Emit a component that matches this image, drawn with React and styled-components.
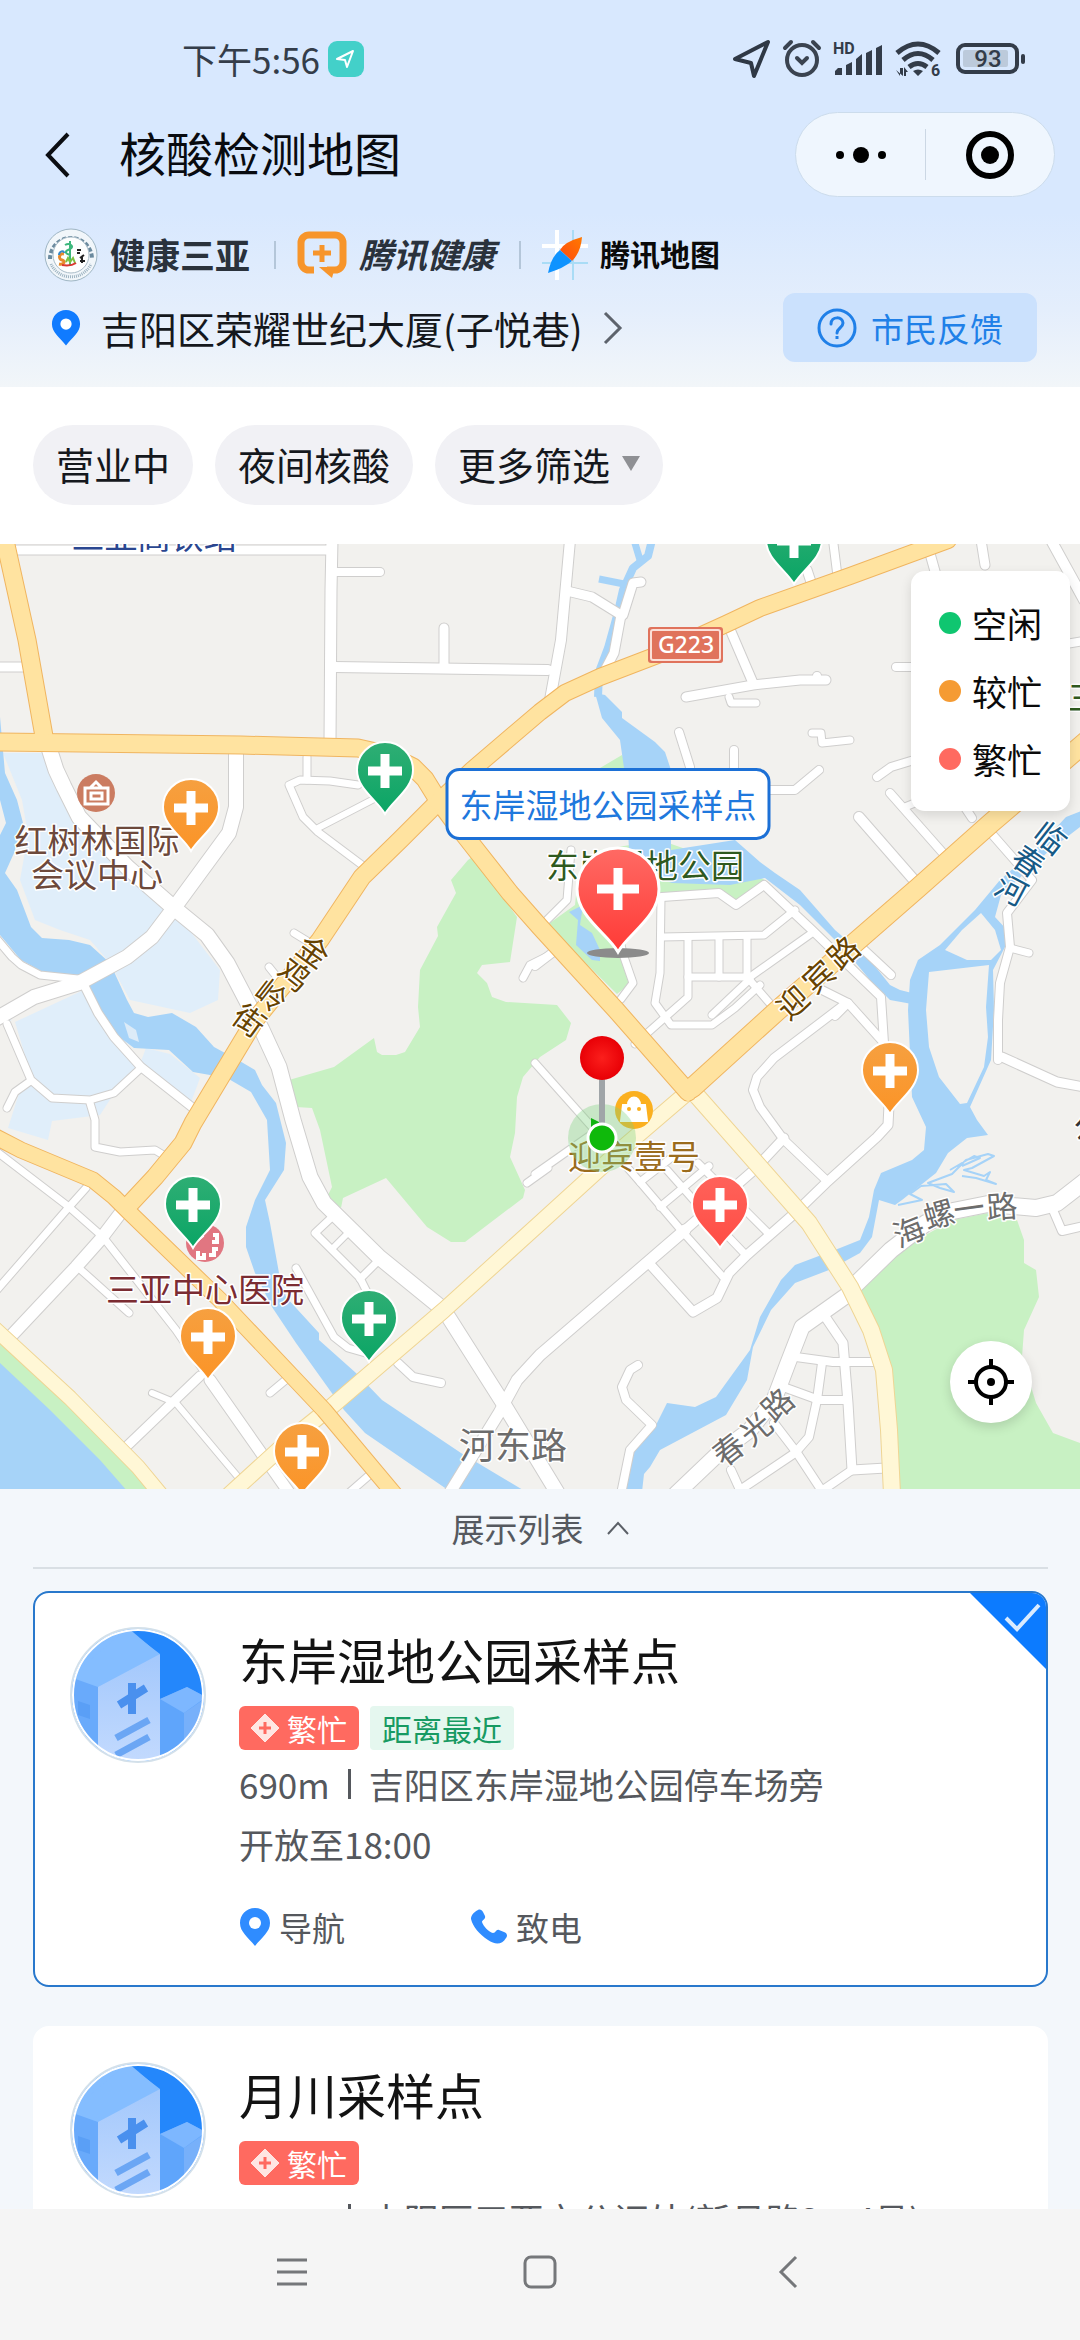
import React, { useState } from 'react';
import styled, { createGlobalStyle } from 'styled-components';

const PIN_COLORS = {
    free: ['#2fae74', '#0aa565'],
    medium: ['#f6a040', '#fb9427'],
    busy: ['#ff625a', '#ff4d45'],
};

const LEGEND = [
    { label: '空闲', color: '#0fc670' },
    { label: '较忙', color: '#f59b33' },
    { label: '繁忙', color: '#ff6a60' },
];

// tip of every pin, on the 1080 x 945 map
const PINS = [
    { id: 1, level: 'free', x: 794, y: 42 },
    { id: 2, level: 'free', x: 385, y: 272 },
    { id: 3, level: 'medium', x: 191, y: 309 },
    { id: 4, level: 'free', x: 193, y: 706 },
    { id: 5, level: 'medium', x: 208, y: 838 },
    { id: 6, level: 'free', x: 369, y: 820 },
    { id: 7, level: 'medium', x: 302, y: 953 },
    { id: 8, level: 'medium', x: 890, y: 572 },
    { id: 9, level: 'busy', x: 720, y: 706 },
];

const SITES = [
    {
        id: 1,
        name: '东岸湿地公园采样点',
        nearest: true,
        distance: '690m',
        address: '吉阳区东岸湿地公园停车场旁',
        open: '开放至18:00',
    },
    {
        id: 2,
        name: '月川采样点',
        nearest: false,
        distance: '730m',
        address: '吉阳区三亚市公证处(新月路2、4号)',
        open: '开放至18:00',
    },
];

// [width, points]
const WHITE_ROADS = [
    [9, '12,550 328,550'],
    [11, '332,540 331,590 330,742'],
    [8, '337,572 380,572'],
    [10, '334,667 548,670'],
    [9, '444,628 444,667'],
    [9, '-5,667 26,667'],
    [15, '48,745 56,770 64,787 79,817 127,867 174,908 207,935 227,963 250,1007 262,1030 279,1067 293,1120 310,1177 324,1203 379,1257 444,1310'],
    [14, '444,1310 503,1403 557,1492'],
    [14, '236,750 236,807 229,833 174,908 152,937 127,957 79,983 34,997 -6,1020'],
    [7, '-4,938 12,957 21,965 40,975 78,979'],
    [8, '84,985 98,1013 114,1037 141,1067 193,1108'],
    [7, '141,1068 114,1093 90,1100 52,1098 31,1080 7,1024'],
    [7, '29,1082 15,1092 7,1108'],
    [7, '90,1103 95,1120 95,1147 120,1152 155,1150 165,1156'],
    [7, '307,757 307,780'],
    [7, '358,785 330,781 300,780 289,785 303,817 318,832 366,868'],
    [6, '318,828 374,799'],
    [7, '294,933 312,944'],
    [7, '269,967 281,982'],
    [7, '523,978 530,965 548,956'],
    [7, '-4,1151 69,1207 103,1237 176,1330 210,1380'],
    [11, '210,1380 290,1494'],
    [7, '-4,1291 69,1207 86,1188'],
    [12, '122,1211 100,1240 76,1267 12,1335'],
    [7, '81,1270 129,1313'],
    [9, '200,1376 126,1447'],
    [6, '152,1393 176,1403 243,1483'],
    [7, '270,1393 288,1378'],
    [7, '350,1492 373,1472'],
    [7, '296,1268 334,1337 348,1348 369,1354'],
    [8, '398,1363 413,1377 441,1383'],
    [7, '331,1218 315,1233 360,1278 368,1294'],
    [7, '379,1260 360,1279'],
    [6, '346,1235 332,1249'],
    [11, '449,1494 499,1413 517,1380 540,1355 685,1230'],
    [9, '685,1230 754,1170 784,1138'],
    [7, '535,1063 592,1127 640,1182 681,1230 723,1277'],
    [7, '535,1174 592,1134'],
    [7, '527,1183 548,1168'],
    [9, '648,1262 693,1312 717,1298 729,1273 747,1255 795,1213 826,1183 877,1137 888,1125 889,1105'],
    [8, '826,1180 784,1140 760,1107 753,1090 757,1077 774,1058 845,1004'],
    [7, '640,1182 671,1158'],
    [7, '660,1207 709,1166'],
    [7, '667,1170 698,1205 743,1252'],
    [7, '698,1163 767,1232'],
    [15, '850,1293 802,1327 788,1363 774,1400 750,1430 719,1453 676,1494'],
    [16, '853,1287 891,1250 926,1223 953,1211 988,1204 1036,1208 1057,1203 1084,1182'],
    [8, '1053,1210 1062,1231 1084,1226'],
    [9, '824,1315 843,1343 848,1403 852,1470 886,1468'],
    [8, '852,1470 820,1492'],
    [8, '796,1357 833,1362 876,1362'],
    [8, '822,1363 817,1400 809,1437 795,1453 740,1490'],
    [8, '786,1388 819,1400 848,1400'],
    [8, '774,1423 797,1453 824,1494'],
    [8, '731,1470 741,1492'],
    [8, '638,1365 630,1370 622,1387 626,1400 652,1425 630,1450 621,1494'],
    [8, '991,833 1012,857 1032,880 1007,913 1010,947 1000,983 998,1020 998,1060'],
    [9, '1002,1057 1057,1082 1084,1087'],
    [7, '1010,948 1029,953'],
    [8, '662,897 719,893 736,905 764,885 812,930 881,997 884,1043'],
    [8, '848,1003 884,1043'],
    [7, '661,897 660,973 655,1003 671,1025 712,1025 735,1008 760,985'],
    [7, '688,937 688,997 635,1044'],
    [7, '662,937 764,935 795,910'],
    [7, '719,937 719,977'],
    [7, '747,937 747,977 773,1007'],
    [7, '688,977 750,977 812,933'],
    [7, '750,979 712,1015'],
    [7, '621,945 624,957 633,983 621,999'],
    [8, '862,948 891,975'],
    [8, '822,990 848,1003 835,1016'],
    [10, '859,817 914,880'],
    [8, '890,793 942,852'],
    [7, '905,807 922,800'],
    [8, '964,806 972,818'],
    [8, '877,777 891,767 914,760'],
    [8, '765,790 795,790 819,770'],
    [8, '679,732 690,767'],
    [8, '734,750 734,770'],
    [7, '812,733 821,733 822,743 850,740'],
    [9, '686,697 753,685 800,680 826,680'],
    [8, '817,680 817,676'],
    [9, '729,627 753,683'],
    [7, '729,697 731,703 756,703'],
    [8, '896,667 914,667'],
    [10, '570,540 561,640 550,700'],
    [9, '567,591 592,597 621,615 614,653 603,674'],
    [9, '623,615 633,583 641,582'],
    [9, '929,550 936,575'],
    [8, '833,540 838,580'],
    [9, '807,570 812,585'],
    [9, '981,540 985,565'],
    [10, '1051,540 1084,600'],
    [8, '1060,645 1084,641'],
    [7, '571,850 567,900 545,922'],
    [8, '535,966 556,950'],
];

const PALE_ROADS = [
    [15, '688,1092 618,1152 540,1223 444,1310 331,1407 286,1443 230,1494'],
    [16, '688,1087 698,1097 809,1223 850,1287 871,1330 884,1370 889,1430 892,1494'],
    [14, '-6,1328 70,1398 138,1467 162,1496'],
];

const YELLOW_ROADS = [
    [17, '4,536 27,640 45,742'],
    [17, '-8,742 241,745 358,748 389,755 413,767 425,779 438,800 455,823 510,893 540,927 616,1010 688,1092'],
    [17, '438,802 400,840 362,877 320,940 255,1020 193,1123 183,1143 155,1177 127,1207'],
    [15, '-6,1136 21,1150 93,1180 114,1197 129,1212 220,1300 324,1410 396,1496'],
    [16, '438,802 472,770 540,712 565,693 600,677 660,654 726,624 760,608 850,576 948,540'],
    [19, '1088,740 991,823 919,887 850,947 778,1010 692,1088'],
];

const GREEN_AREAS = [
    'M468 860 451 880 456 893 437 927 438 936 420 970 418 1007 420 1027 405 1052 396 1055 382 1055 377 1052 374 1038 334 1067 289 1080 296 1107 312 1108 320 1130 332 1187 327 1197 341 1208 343 1198 386 1178 427 1227 451 1242 465 1242 523 1198 525 1190 510 1157 515 1133 517 1097 523 1077 540 1057 566 1040 571 1023 557 1005 506 1002 492 997 487 983 477 973 482 965 510 962 517 917 500 893 475 855Z',
    'M898 1250 953 1220 988 1213 1017 1220 1024 1240 1024 1263 1036 1270 1039 1297 1024 1330 1022 1357 1036 1403 1053 1433 1080 1443V1492H893L884 1370 860 1287Z',
    'M0 1340 60 1390 164 1492H0Z',
    'M547 925 575 905 578 875 600 850 660 840 745 870 765 880 845 955 840 960 766 888 736 905 719 893 664 897 627 935 624 957 631 983 617 994Z',
    'M600 768 622 755 632 775 640 785H600Z',
];

const PALE_WATER = [
    'M3 753 48 753 64 790 80 820 170 905 220 970 218 1000 190 1013 130 1000 110 963 90 940 60 930 35 920 20 880 28 835 22 800Z',
    'M15 1022 88 988 141 1064 115 1092 100 1115 52 1121 48 1140 8 1128 20 1090 33 1082Z',
    'M146 1048 170 1054 200 1078 190 1105 140 1064Z',
    'M0 1025 12 1020 -2 1010Z',
];

const WATER = [
    'M0 717 5 773 17 800 23 823 14 853 5 873 17 890 31 927 42 938 69 940 90 945 110 963 127 1000 134 1013 148 1017 172 1013 196 1027 214 1047 238 1060 255 1070 262 1085 276 1103 286 1143 284 1170 265 1200 270 1223 279 1273 286 1297 319 1333 319 1340 356 1373 382 1400 461 1453 523 1490H448L365 1433 344 1410 296 1343 272 1307 255 1273 246 1247V1227L255 1200 270 1170 267 1120 251 1092 227 1078 193 1072 169 1050 134 1048 114 1033 100 1010 79 975 45 973 21 960 0 935V835L6 823 0 800Z',
    'M0 1363 50 1410 100 1460 128 1492H0Z',
    'M595 693 605 695 622 712V718L655 742 665 752 671 770V850L735 840 760 862 775 873 800 890 835 930 870 960 890 985 900 990 912 993V1004L890 1000 870 980 845 950 800 905 765 878 730 885 672 883 630 868 625 775 620 740 602 718 597 700Z',
    'M1084 810 1066 817 1040 845 1000 880 975 910 940 945 918 960 910 980 908 1010 912 1097 926 1127 924 1150 912 1160 881 1173 874 1190 869 1217 860 1240 840 1248 795 1265 781 1280 760 1317 750 1350 716 1397 695 1407 667 1403 657 1423 633 1450 624 1492H642L644 1474 650 1467 660 1450 726 1415 747 1380 753 1347 771 1310 795 1283 829 1270 860 1253 872 1237 879 1200 895 1205 902 1200 912 1192 936 1173 948 1153 967 1138 988 1135 977 1120 970 1107 991 1060 994 1010 993 970 1005 947 1007 930 995 917 1001 895 1050 850 1084 824Z',
    'M569 912 583 905 580 925 592 933 600 950 600 961 592 960 576 945 578 920Z',
];

const ISLANDS = [
    'M945 950 962 930 981 913 995 930 1001 950 991 960 967 960Z',
    'M929 972 989 965 986 1007 988 1037 984 1067 967 1103 960 1104 939 1077 929 1047 926 1010Z',
];

const MAP_LABELS = [
    { text: '三亚高铁站', x: 154, y: 549, color: '#2a4690' },
    { text: '红树林国际', x: 97, y: 853, color: '#6d493b' },
    { text: '会议中心', x: 97, y: 887, color: '#6d493b' },
    { text: '东岸湿地公园', x: 645, y: 878, color: '#2f5a1f' },
    { text: '迎宾壹号', x: 634, y: 1169, color: '#9b6c1d' },
    { text: '三亚中心医院', x: 205, y: 1302, color: '#7b2c32' },
    { text: '河东路', x: 513, y: 1459, color: '#6c6c6c', size: 36 },
    { text: '公', x: 1090, y: 1139, color: '#333' },
    { text: '三', x: 1084, y: 710, color: '#2f5a1f' },
];

// street names follow their road one character at a time
const STREET_CHARS = [
    ['金', 313, 952, 36, '#674300'],
    ['鸡', 294, 975, 38, '#674300'],
    ['岭', 271, 996, 38, '#674300'],
    ['街', 249, 1021, 36, '#674300'],
    ['迎', 793, 1003, -42, '#674300'],
    ['宾', 819, 977, -42, '#674300'],
    ['路', 844, 953, -42, '#674300'],
    ['临', 1050, 838, 38, '#175a86'],
    ['春', 1028, 862, 34, '#175a86'],
    ['河', 1011, 890, 28, '#175a86'],
    ['春', 729, 1450, -38, '#6c6c6c'],
    ['光', 756, 1429, -40, '#6c6c6c'],
    ['路', 778, 1405, -42, '#6c6c6c'],
    ['海', 909, 1232, -22, '#6c6c6c'],
    ['螺', 939, 1215, -16, '#6c6c6c'],
    ['一', 969, 1209, -8, '#6c6c6c'],
    ['路', 1002, 1207, -4, '#6c6c6c'],
];

const Roads = ({ roads, fill, edge }) => <g fill="none" strokeLinecap="round" strokeLinejoin="round">
    {roads.map(([width, points]) => <polyline key={points} points={points} stroke={edge} strokeWidth={width + 2}/>)}
    {roads.map(([width, points]) => <polyline key={points} points={points} stroke={fill} strokeWidth={width}/>)}
</g>;

const MapDrawing = () => <MapSvg viewBox="0 544 1080 945">
    <rect x="0" y="544" width="1080" height="945" fill="#f2f1ee"/>
    {PALE_WATER.map(d => <path key={d} d={d} fill="#e0eefa"/>)}
    {GREEN_AREAS.map(d => <path key={d} d={d} fill="#c8f1c3"/>)}
    {WATER.map(d => <path key={d} d={d} fill="#a6d3f8"/>)}
    {ISLANDS.map(d => <path key={d} d={d} fill="#f2f1ee"/>)}
    <path d="M124 1022l12 8 3 12-10-4z" fill="#dcebf8"/>
    <g fill="none" stroke="#a6d3f8" strokeLinejoin="round">
        <path d="M652 540 648 556 633 568 623 590 618 612 608 648 599 672 598 697" strokeWidth="8"/>
        <path d="M634 540 640 560M599 579 624 584" strokeWidth="7"/>
        <path d="M898 1205 922 1200 910 1194 921 1186 946 1184 954 1192 940 1188 928 1183 952 1174 966 1160 988 1154 994 1156 972 1168 964 1170 984 1176 990 1172 986 1180 996 1184 976 1178 962 1176M950 1170 974 1156 980 1158 962 1166" strokeWidth="2"/>
    </g>
    <Roads roads={WHITE_ROADS} fill="#fff" edge="#cfcecd"/>
    <Roads roads={PALE_ROADS} fill="#fff7d6" edge="#efd594"/>
    <Roads roads={YELLOW_ROADS} fill="#ffe3a0" edge="#f0b560"/>
    <path d="M677 1091 688 1102 700 1091 692 1078 684 1080z" fill="#ffe3a0"/>

    <rect x="648" y="627" width="75" height="36" rx="3" fill="#e0735c"/>
    <rect x="651" y="630" width="69" height="30" rx="2" fill="none" stroke="#fbe0d8" strokeWidth="2"/>
    <ShieldText x="686" y="653">G223</ShieldText>

    <circle cx="96" cy="793" r="19" fill="#cb7c61"/>
    <path d="M85 788h23v16H85zM90 788l6-6 6 6M91 793h11v6H91z" fill="none" stroke="#fff" strokeWidth="3"/>
    <circle cx="205" cy="1243" r="19" fill="#e17681"/>
    <path d="M198 1251v7h6v-5M213 1235h4v7h-5M209 1255h5v-6h4M197 1240l6-5" fill="none" stroke="#fff" strokeWidth="4"/>
    <circle cx="634" cy="1110" r="19" fill="#fbb01f"/>
    <path d="M623 1105h22l2 16h-26zM628 1105c0-10 12-10 12 0" fill="#fff" stroke="#fff" strokeWidth="2"/>
    <circle cx="629" cy="1109" r="2" fill="#fbb01f"/>
    <circle cx="639" cy="1109" r="2" fill="#fbb01f"/>

    {MAP_LABELS.map(({ text, x, y, color, size }) =>
        <MapText key={text} x={x} y={y} fill={color} $size={size}>{text}</MapText>)}
    {STREET_CHARS.map(([char, x, y, angle, color]) =>
        <MapText key={`${x}-${y}`} x="0" y="11" fill={color} $size={31} transform={`translate(${x} ${y}) rotate(${angle})`}>{char}</MapText>)}

    <circle cx="602" cy="1138" r="34" fill="#7bd07b" fillOpacity="0.35"/>
    <path d="M591 1118v10l10-5z" fill="#0fb30f"/>
    <path d="M602 1078v46" stroke="#a0a5a8" strokeWidth="6"/>
    <circle cx="602" cy="1138" r="14" fill="#0fb90b" stroke="#fff" strokeWidth="3"/>
    <circle cx="602" cy="1058" r="22" fill="url(#ball)"/>
    <radialGradient id="ball">
        <stop offset="0" stopColor="#fb1f1c"/>
        <stop offset="1" stopColor="#e80006"/>
    </radialGradient>
</MapSvg>;

const PinIcon = ({ level, id }) => <svg width="60" height="76" viewBox="0 0 60 76">
    <linearGradient id={id} x1="0" y1="0" x2="0" y2="1">
        <stop offset="0" stopColor={PIN_COLORS[level][0]}/>
        <stop offset="1" stopColor={PIN_COLORS[level][1]}/>
    </linearGradient>
    <path d="M30 74C22 60 2 49 2 30a28 28 0 0 1 56 0c0 19-20 30-28 44z" fill={`url(#${id})`} stroke="#fff" strokeWidth="2"/>
    <path d="M30 14v34M13 31h34" stroke="#fff" strokeWidth="9"/>
</svg>;

const BigPinIcon = () => <svg width="86" height="114" viewBox="0 0 86 114">
    <linearGradient id="bigpin" x1="0" y1="0" x2="0" y2="1">
        <stop offset="0" stopColor="#ff6a64"/>
        <stop offset="1" stopColor="#ff3a36"/>
    </linearGradient>
    <ellipse cx="43" cy="107" rx="31" ry="5" fill="#8b8b8b"/>
    <path d="M43 106C32 87 2 71 2 43a41 41 0 0 1 82 0c0 28-30 44-41 63z" fill="url(#bigpin)" stroke="#fff" strokeWidth="3"/>
    <path d="M43 22v42M22 43h42" stroke="#fff" strokeWidth="9"/>
</svg>;

const BuildingArt = () => <svg width="136" height="136" viewBox="0 0 136 136">
    <clipPath id="disc"><circle cx="68" cy="68" r="66"/></clipPath>
    <linearGradient id="face" x1="0" y1="0" x2="0" y2="1">
        <stop offset="0" stopColor="#a3c8fc"/>
        <stop offset="1" stopColor="#c3dafe"/>
    </linearGradient>
    <circle cx="68" cy="68" r="67" fill="#fff" stroke="#d3e0ea" strokeWidth="2"/>
    <g clipPath="url(#disc)">
        <path d="M0 0h136v136H0z" fill="#2487fb"/>
        <path d="M0 0h57L90 28v108H0z" fill="#84bdff"/>
        <path d="M0 50 57 2 90 27 28 60z" fill="#84bdff"/>
        <path d="M0 50 28 60v76H0z" fill="#69aafb"/>
        <path d="M8 74l12 4v14L8 88z" fill="#5a9ff6"/>
        <path d="M28 60 90 27v109H28z" fill="url(#face)"/>
        <path d="M90 72l27-12 19 10v66H90z" fill="#5fa5fb"/>
        <path d="M90 72l27-12 19 10-22 16z" fill="#7db7ff"/>
        <path d="M114 86l22-15v65h-22z" fill="#77b0fa"/>
        <path d="M62 56v31M49 78l27-17" stroke="#4a90ee" strokeWidth="8"/>
        <path d="M46 111l33-18M46 128l33-18" stroke="#6ba6f4" strokeWidth="7"/>
    </g>
    <circle cx="68" cy="68" r="65" fill="none" stroke="#fff" strokeWidth="2"/>
</svg>;

const LocationIcon = ({ width, color }) => <svg width={width} height={width * 1.25} viewBox="0 0 32 40">
    <path d="M16 1C7 1 1 8 1 16c0 9 8 14 15 23 7-9 15-14 15-23C31 8 25 1 16 1z" fill={color}/>
    <circle cx="16" cy="16" r="6" fill="#fff"/>
</svg>;

const StatusIcons = () => <StatusGroup>
    <svg width="40" height="40" viewBox="0 0 40 40">
        <path d="M3 20 36 3 22 37 19 24z" fill="none" stroke="#2f3845" strokeWidth="4" strokeLinejoin="round"/>
    </svg>
    <svg width="40" height="40" viewBox="0 0 40 40" fill="none" stroke="#3a4350" strokeWidth="4" strokeLinecap="round">
        <circle cx="20" cy="21" r="15"/>
        <path d="M15 19l5 5 5-5M3 9l6-6M37 9l-6-6"/>
    </svg>
    <svg width="52" height="40" viewBox="0 0 52 40">
        <StatusText x="1" y="15">HD</StatusText>
        <path d="M3 36v-4l3-3h4v7zM14 36V26l6-3v13zM24 36V20l6-5v21zM34 36V14l6-3v25zM44 36V9l6-3v30z" fill="#333c49"/>
    </svg>
    <svg width="52" height="40" viewBox="0 0 52 40">
        <g fill="none" stroke="#333c49" strokeWidth="5">
            <path d="M3 14q21-18 42 0M9 21q15-13 30 0M15 28q9-7 18 0"/>
        </g>
        <path d="M19 32q5-3 10 0l-5 5zM2 31l4 6V29h3v8zM10 37V28l4 5h-2v4z" fill="#333c49"/>
        <StatusText x="37" y="37">6</StatusText>
    </svg>
    <svg width="70" height="40" viewBox="0 0 70 40">
        <rect x="2" y="6" width="59" height="27" rx="7" fill="none" stroke="#333c49" strokeWidth="4"/>
        <rect x="7" y="11" width="45" height="17" rx="2" fill="#bccadb"/>
        <rect x="65" y="15" width="4" height="10" rx="2" fill="#333c49"/>
        <BatteryText x="32" y="28">93</BatteryText>
    </svg>
</StatusGroup>;

const HealthSanyaLogo = () => <svg width="54" height="54" viewBox="0 0 54 54">
    <circle cx="27" cy="27" r="26" fill="#f1f6fa" stroke="#9fb6c4" strokeWidth="1"/>
    <path d="M6 31a21 21 0 0 1 42 0" fill="none" stroke="#6b8a9e" strokeWidth="4" strokeDasharray="4 2"/>
    <path d="M7 36a22 22 0 0 0 40 0" fill="none" stroke="#9db3c1" strokeWidth="3" strokeDasharray="1 1"/>
    <circle cx="27" cy="27" r="18" fill="#fdfefe" stroke="#a9bcc8" strokeWidth="1"/>
    <path d="M26 13v25M21 17c5-3 10 2 5 4s-6 4 0 6" fill="none" stroke="#3cb77c" strokeWidth="2"/>
    <path d="M20 26c-5-1-6 5-2 6s2 5-3 4" fill="none" stroke="#e7892b" strokeWidth="3"/>
    <path d="M15 27c0-4 5-5 5-2" fill="none" stroke="#3488c9" strokeWidth="2"/>
    <path d="M22 34l2-4 2 4 3-4 2 5" fill="none" stroke="#7cc242" strokeWidth="2"/>
    <path d="M33 22h4M33 25h3M36 30l4-3M36 33h5M38 28v7" stroke="#222" strokeWidth="2"/>
    <path d="M18 37c6 1 11 0 14-2" fill="none" stroke="#d9372f" strokeWidth="2"/>
</svg>;

const TencentHealthLogo = () => <svg width="50" height="48" viewBox="0 0 50 48">
    <path d="M17 39H12a8 8 0 0 1-8-8V12a8 8 0 0 1 8-8h26a8 8 0 0 1 8 8v19a8 8 0 0 1-8 8h-8" fill="none" stroke="#f7952b" strokeWidth="7"/>
    <path d="M22 36h16l-3 11z" fill="#f7952b"/>
    <path d="M25 14v17M16 22h18" stroke="#f7952b" strokeWidth="5"/>
</svg>;

const TencentMapLogo = () => <svg width="46" height="50" viewBox="0 0 46 50">
    <path d="M15 0v50M0 16h46" stroke="#fff" strokeWidth="4"/>
    <path d="M31 0v50M0 33h46" stroke="#a9dcf6" strokeWidth="2"/>
    <linearGradient id="needleTop" x1="1" y1="0" x2="0" y2="1">
        <stop offset="0" stopColor="#ff7a00"/>
        <stop offset="1" stopColor="#ff4a10"/>
    </linearGradient>
    <path d="M40 7Q22 12 18 20L30 31Q39 22 40 7z" fill="url(#needleTop)"/>
    <path d="M6 43Q9 27 18 20L30 31Q22 38 6 43z" fill="#0f93ff"/>
</svg>;

const SiteCard = ({ site, selected }) => <Card $selected={selected}>
    {selected && <Corner width="76" height="76" viewBox="0 0 76 76">
        <path d="M0 0h76v76z" fill="#0c7bff"/>
        <path d="M36 25l11 11 22-24" fill="none" stroke="#d9ebff" strokeWidth="4"/>
    </Corner>}
    <BuildingArt/>
    <CardBody>
        <SiteName>{site.name}</SiteName>
        <Tags>
            <BusyTag>
                <svg width="30" height="30" viewBox="0 0 30 30">
                    <path d="M15 1 29 15 15 29 1 15z" fill="#ffe6e2" stroke="#ffe6e2" strokeWidth="1" strokeLinejoin="round"/>
                    <path d="M15 9v12M9 15h12" stroke="#ff6a60" strokeWidth="3"/>
                </svg>
                繁忙
            </BusyTag>
            {site.nearest && <NearTag>距离最近</NearTag>}
        </Tags>
        <Detail>
            <span>{site.distance}</span>
            <DetailBar/>
            <span>{site.address}</span>
        </Detail>
        <Detail>{site.open}</Detail>
        <Actions>
            <ActionButton type="button">
                <LocationIcon width={32} color="#2f8cff"/>
                导航
            </ActionButton>
            <ActionButton type="button">
                <svg width="38" height="38" viewBox="0 0 38 38">
                    <path d="M8 2c2-1 4 0 5 2l2 4c1 3-3 4-3 6 1 4 7 10 11 11 3 0 3-4 6-3l5 2c3 1 4 4 2 6-4 7-11 7-18 2C9 26 3 19 1 11 1 7 4 4 8 2z" fill="#2f8cff"/>
                </svg>
                致电
            </ActionButton>
        </Actions>
    </CardBody>
</Card>;

const App = () => {
    const [ selectedId, setSelectedId ] = useState(1);

    return <Page>
        <GlobalStyle/>
        <Header>
            <StatusBar>
                <Clock>
                    下午5:56
                    <svg width="36" height="36" viewBox="0 0 36 36">
                        <rect width="36" height="36" rx="9" fill="#43d0c9"/>
                        <path d="M9 18 25 10 19 26 17 19z" fill="none" stroke="#fff" strokeWidth="2" strokeLinejoin="round"/>
                    </svg>
                </Clock>
                <StatusIcons/>
            </StatusBar>
            <TitleBar>
                <IconButton type="button" aria-label="返回">
                    <svg width="26" height="46" viewBox="0 0 26 46">
                        <path d="M23 2 3 23l20 21" fill="none" stroke="#0b0d12" strokeWidth="4"/>
                    </svg>
                </IconButton>
                <Title>核酸检测地图</Title>
                <Capsule>
                    <CapsuleButton type="button" aria-label="更多">
                        <svg width="50" height="18" viewBox="0 0 50 18">
                            <circle cx="4" cy="9" r="4"/>
                            <circle cx="25" cy="9" r="8"/>
                            <circle cx="46" cy="9" r="4"/>
                        </svg>
                    </CapsuleButton>
                    <CapsuleButton type="button" aria-label="关闭">
                        <svg width="48" height="48" viewBox="0 0 48 48">
                            <circle cx="24" cy="24" r="21" fill="none" stroke="#000" strokeWidth="6"/>
                            <circle cx="24" cy="24" r="9"/>
                        </svg>
                    </CapsuleButton>
                </Capsule>
            </TitleBar>
            <Brands>
                <Brand>
                    <HealthSanyaLogo/>
                    <BrandName $size={35} $color="#2a323c">健康三亚</BrandName>
                </Brand>
                <Brand>
                    <TencentHealthLogo/>
                    <BrandName $size={34} $color="#2a323c" $italic>腾讯健康</BrandName>
                </Brand>
                <Brand>
                    <TencentMapLogo/>
                    <BrandName $size={30} $color="#0a0a0a">腾讯地图</BrandName>
                </Brand>
            </Brands>
            <PlaceRow>
                <PlaceButton type="button">
                    <LocationIcon width={30} color="#107bff"/>
                    <span>吉阳区荣耀世纪大厦(子悦巷)</span>
                    <svg width="20" height="34" viewBox="0 0 20 34">
                        <path d="M2 2l15 15L2 32" fill="none" stroke="#5d636c" strokeWidth="3"/>
                    </svg>
                </PlaceButton>
                <FeedbackButton type="button">
                    <svg width="40" height="40" viewBox="0 0 40 40" fill="none" stroke="#2080e8" strokeWidth="3">
                        <circle cx="20" cy="20" r="18"/>
                        <path d="M14 16c0-8 12-8 12-1 0 5-6 5-6 10" strokeLinecap="round"/>
                        <path d="M20 28v3"/>
                    </svg>
                    市民反馈
                </FeedbackButton>
            </PlaceRow>
        </Header>

        <Filters>
            <Chip type="button">营业中</Chip>
            <Chip type="button">夜间核酸</Chip>
            <Chip type="button">
                更多筛选
                <svg width="18" height="15" viewBox="0 0 18 15">
                    <path d="M0 0h18l-9 15z" fill="#8f9094"/>
                </svg>
            </Chip>
        </Filters>

        <MapArea>
            <MapDrawing/>
            {PINS.map(pin =>
                <Pin key={pin.id} type="button" aria-label="采样点" $x={pin.x} $y={pin.y}>
                    <PinIcon level={pin.level} id={`pin${pin.id}`}/>
                </Pin>)}
            <Pin type="button" aria-label="东岸湿地公园采样点" $x={618} $y={416}>
                <BigPinIcon/>
            </Pin>
            <Callout $x={608} $y={296}>东岸湿地公园采样点</Callout>
            <Legend>
                {LEGEND.map(({ label, color }) =>
                    <LegendItem key={label} $color={color}>{label}</LegendItem>)}
            </Legend>
            <LocateButton type="button" aria-label="定位">
                <svg width="46" height="46" viewBox="0 0 46 46" fill="none" stroke="#000" strokeWidth="4">
                    <circle cx="23" cy="23" r="15"/>
                    <path d="M23 0v9M23 37v9M0 23h9M37 23h9"/>
                    <circle cx="23" cy="23" r="4" fill="#000" stroke="none"/>
                </svg>
            </LocateButton>
        </MapArea>

        <Sheet>
            <SheetToggle type="button">
                展示列表
                <svg width="24" height="16" viewBox="0 0 24 16">
                    <path d="M2 14 12 3l10 11" fill="none" stroke="#5b6067" strokeWidth="2"/>
                </svg>
            </SheetToggle>
            <Cards>
                {SITES.map(site =>
                    <li key={site.id} onClick={() => setSelectedId(site.id)}>
                        <SiteCard site={site} selected={site.id === selectedId}/>
                    </li>)}
            </Cards>
        </Sheet>

        <SystemNav>
            <IconButton type="button" aria-label="任务">
                <svg width="32" height="32" viewBox="0 0 32 32">
                    <path d="M1 4h30M1 16h30M1 28h30" stroke="#75777a" strokeWidth="3"/>
                </svg>
            </IconButton>
            <IconButton type="button" aria-label="主页">
                <svg width="34" height="34" viewBox="0 0 34 34">
                    <rect x="2" y="2" width="30" height="30" rx="6" fill="none" stroke="#75777a" strokeWidth="3"/>
                </svg>
            </IconButton>
            <IconButton type="button" aria-label="后退">
                <svg width="20" height="34" viewBox="0 0 20 34">
                    <path d="M18 2 3 17l15 15" fill="none" stroke="#75777a" strokeWidth="3"/>
                </svg>
            </IconButton>
        </SystemNav>
    </Page>
};

const GlobalStyle = createGlobalStyle`
    * {
        box-sizing: border-box;
    }

    body {
        margin: 0;
        font-family: "Noto Sans CJK SC", "Noto Sans", sans-serif;
        color: #15181d;
        background: #f3f7fb;
    }

    button {
        margin: 0;
        padding: 0;
        border: 0;
        background: none;
        color: inherit;
        font: inherit;
        cursor: pointer;
    }

    svg {
        display: block;
        flex-shrink: 0;
    }
`;

const Page = styled.div`
    display: flex;
    flex-direction: column;
    height: 100vh;
`;

const Header = styled.header`
    flex-shrink: 0;
    padding-bottom: 25px;
    background: linear-gradient(#d8e8fe 0%, #d8e8fe 55%, #e4eefc 80%, #f2f6f9 100%);
`;

const StatusBar = styled.div`
    display: flex;
    align-items: center;
    justify-content: space-between;
    height: 112px;
    padding: 6px 54px 0 182px;
`;

const Clock = styled.div`
    display: flex;
    align-items: center;
    gap: 8px;
    font-size: 35px;
    line-height: 40px;
    color: #343d4a;
`;

const StatusGroup = styled.div`
    display: flex;
    align-items: center;
    gap: 10px;
`;

const StatusText = styled.text`
    font: 700 16px Roboto, sans-serif;
    fill: #333c49;
`;

const BatteryText = styled.text`
    font: 500 24px Roboto, sans-serif;
    fill: #333c49;
    text-anchor: middle;
`;

const TitleBar = styled.div`
    display: flex;
    align-items: center;
    height: 85px;
    padding: 0 25px 0 45px;
`;

const IconButton = styled.button`
    display: flex;
    align-items: center;
    justify-content: center;
`;

const Title = styled.h1`
    flex: 1;
    margin: 0 0 0 48px;
    padding-bottom: 6px;
    font-size: 47px;
    font-weight: 400;
    line-height: 60px;
    color: #090b10;
`;

const Capsule = styled.div`
    display: grid;
    grid-template-columns: 1fr 1fr;
    width: 260px;
    height: 85px;
    border: 1px solid #ccdcec;
    border-radius: 43px;
    background: #eff6fe;
`;

const CapsuleButton = styled.button`
    display: flex;
    align-items: center;
    justify-content: center;

    & + & {
        background: linear-gradient(#cbd7e4, #cbd7e4) left center / 1px 51px no-repeat;
    }
`;

const Brands = styled.div`
    display: flex;
    align-items: center;
    height: 54px;
    margin-top: 31px;
    padding-left: 44px;
`;

const Brand = styled.div`
    display: flex;
    align-items: center;
    gap: 12px;

    & + & {
        margin-left: 24px;
        padding-left: 23px;
        background: linear-gradient(#b4c6d9, #b4c6d9) left center / 2px 28px no-repeat;
    }
`;

const BrandName = styled.span`
    padding-bottom: 3px;
    font-size: ${({ $size }) => $size}px;
    font-weight: 700;
    font-style: ${({ $italic }) => $italic ? 'italic' : 'normal'};
    line-height: 51px;
    color: ${({ $color }) => $color};
`;

const PlaceRow = styled.div`
    display: flex;
    align-items: center;
    justify-content: space-between;
    margin-top: 11px;
    padding: 0 43px 0 51px;
`;

const PlaceButton = styled.button`
    display: flex;
    align-items: center;
    gap: 20px;
    font-size: 38px;
    line-height: 60px;
`;

const FeedbackButton = styled.button`
    display: flex;
    align-items: center;
    justify-content: center;
    gap: 14px;
    width: 254px;
    height: 69px;
    border-radius: 12px;
    background: #cbe1fd;
    font-size: 33px;
    color: #2080e8;
`;

const Filters = styled.div`
    display: flex;
    flex-shrink: 0;
    gap: 22px;
    padding: 38px 33px 39px;
    background: #fff;
`;

const Chip = styled.button`
    display: flex;
    align-items: center;
    gap: 12px;
    height: 80px;
    padding: 0 23px 4px;
    border-radius: 40px;
    background: #f1f1f5;
    font-size: 38px;
`;

const MapArea = styled.section`
    position: relative;
    flex-shrink: 0;
    width: 100%;
    aspect-ratio: 1080 / 945;
    overflow: hidden;
`;

const MapSvg = styled.svg`
    width: 100%;
    height: 100%;
`;

const MapText = styled.text`
    font-size: ${({ $size }) => $size || 33}px;
    text-anchor: middle;
    paint-order: stroke;
    stroke: #fff;
    stroke-width: 3px;
    stroke-linejoin: round;
`;

const ShieldText = styled.text`
    font: 500 23px "Noto Sans", sans-serif;
    fill: #fff;
    text-anchor: middle;
`;

const Pin = styled.button`
    position: absolute;
    left: calc(${({ $x }) => $x} / 1080 * 100%);
    top: calc(${({ $y }) => $y} / 945 * 100%);
    transform: translate(-50%, -100%);
`;

const Callout = styled.div`
    position: absolute;
    left: calc(${({ $x }) => $x} / 1080 * 100%);
    top: calc(${({ $y }) => $y} / 945 * 100%);
    transform: translate(-50%, -100%);
    padding: 0 11px;
    border: 3px solid #1c70d6;
    border-radius: 14px;
    background: #fff;
    font-size: 33px;
    line-height: 66px;
    white-space: nowrap;
    color: #1f78dd;
`;

const Legend = styled.ul`
    position: absolute;
    top: 27px;
    right: 10px;
    margin: 0;
    padding: 18px 28px;
    border-radius: 14px;
    background: #fff;
    box-shadow: 0 4px 12px rgba(0, 0, 0, 0.12);
    list-style: none;
`;

const LegendItem = styled.li`
    display: flex;
    align-items: center;
    gap: 11px;
    font-size: 35px;
    line-height: 68px;
    color: #0a0a0a;

    &::before {
        content: '';
        width: 22px;
        height: 22px;
        border-radius: 50%;
        background: ${({ $color }) => $color};
    }
`;

const LocateButton = styled.button`
    position: absolute;
    right: 48px;
    bottom: 66px;
    display: flex;
    align-items: center;
    justify-content: center;
    width: 82px;
    height: 82px;
    border-radius: 50%;
    background: #fff;
    box-shadow: 0 4px 12px rgba(0, 0, 0, 0.14);
`;

const Sheet = styled.main`
    flex: 1;
    min-height: 0;
    padding: 0 32px 0 33px;
    overflow: hidden;
    background: #f3f7fb;
`;

const SheetToggle = styled.button`
    display: flex;
    align-items: center;
    justify-content: center;
    gap: 22px;
    width: 100%;
    height: 80px;
    border-bottom: 2px solid #d9dfe4;
    font-size: 33px;
    color: #55595f;
`;

const Cards = styled.ul`
    display: flex;
    flex-direction: column;
    gap: 39px;
    margin: 22px 0 0;
    padding: 0;
    list-style: none;
`;

const Card = styled.article`
    position: relative;
    display: flex;
    align-items: flex-start;
    gap: 33px;
    padding: 34px 35px 36px;
    border: 2px solid ${({ $selected }) => $selected ? '#2878cc' : '#fff'};
    border-radius: 16px;
    overflow: hidden;
    background: #fff;
`;

const Corner = styled.svg`
    position: absolute;
    top: 0;
    right: 0;
`;

const CardBody = styled.div`
    flex: 1;
    min-width: 0;
`;

const SiteName = styled.h2`
    margin: 0;
    font-size: 49px;
    font-weight: 400;
    line-height: 64px;
    color: #131313;
`;

const Tags = styled.div`
    display: flex;
    gap: 11px;
    margin: 15px 0 4px;
`;

const BusyTag = styled.span`
    display: flex;
    align-items: center;
    gap: 7px;
    padding: 0 12px 0 11px;
    border-radius: 6px;
    background: #ff6a60;
    font-size: 30px;
    line-height: 44px;
    color: #fff;
`;

const NearTag = styled.span`
    padding: 0 12px;
    border-radius: 4px;
    background: #e5f7ef;
    font-size: 30px;
    line-height: 44px;
    color: #179a62;
`;

const Detail = styled.p`
    display: flex;
    align-items: center;
    margin: 0;
    font-size: 35px;
    line-height: 60px;
    white-space: nowrap;
    color: #55585d;
`;

const DetailBar = styled.i`
    width: 3px;
    height: 30px;
    margin: 0 18px;
    background: #55585d;
`;

const Actions = styled.div`
    display: flex;
    gap: 125px;
    margin-top: 31px;
`;

const ActionButton = styled.button`
    display: flex;
    align-items: center;
    gap: 8px;
    height: 44px;
    font-size: 33px;
    color: #55585d;
`;

const SystemNav = styled.nav`
    display: grid;
    grid-template-columns: repeat(3, 23%);
    flex-shrink: 0;
    align-items: center;
    justify-content: center;
    height: 131px;
    padding-bottom: 6px;
    background: #f5f5f5;
`;

export default App;
